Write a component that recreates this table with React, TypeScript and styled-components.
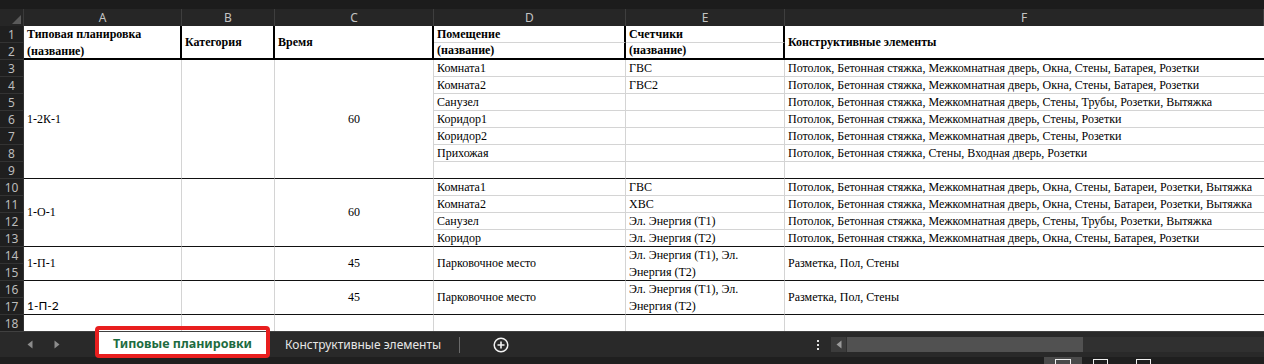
import React from 'react'
import styled, { createGlobalStyle } from 'styled-components'

type Edge = 'thick' | 'black' | 'gray' | 'none'

interface CellSpec {
  r: number
  c: number
  rs?: number
  text?: React.ReactNode
  v?: 'flex-start' | 'center' | 'flex-end'
  align?: 'flex-start' | 'center'
  head?: boolean
  bottom?: Edge
  sans?: boolean
}

const GlobalStyle = createGlobalStyle`
  html, body {
    margin: 0;
    padding: 0;
    background: #1e1e1e;
  }
  * {
    box-sizing: border-box;
  }
`

const COLUMNS = ['A', 'B', 'C', 'D', 'E', 'F']

const Window = styled.div`
  width: 1264px;
  height: 364px;
  overflow: hidden;
  background: #1e1e1e;
  display: flex;
  flex-direction: column;
`

const TopStrip = styled.div`
  flex: none;
  height: 9px;
  background: #1c1c1c;
`

const Sheet = styled.div`
  flex: none;
  height: 322px;
  overflow: hidden;
  display: grid;
  grid-template-columns: 24px 158px 93px 159px 192px 159px 1fr;
  grid-template-rows: repeat(19, 17px);
  background: #ffffff;
`

const Corner = styled.div`
  grid-row: 1;
  grid-column: 1;
  background: #262626;
  position: relative;
  border-right: 1px solid #3a3a3a;

  &::after {
    content: '';
    position: absolute;
    right: 2px;
    bottom: 2px;
    border-style: solid;
    border-width: 0 0 9px 9px;
    border-color: transparent transparent #5a5a5a transparent;
  }
`

const ColHeader = styled.div<{ $col: number }>`
  grid-row: 1;
  grid-column: ${(p) => p.$col + 2};
  background: #262626;
  color: #c4c4c4;
  font: 12px 'Noto Sans', 'Open Sans', sans-serif;
  display: flex;
  align-items: center;
  justify-content: center;
  border-right: 1px solid #3e3e3e;
`

const RowHeader = styled.div<{ $row: number }>`
  grid-row: ${(p) => p.$row + 1};
  grid-column: 1;
  background: #1f1f1f;
  color: #bcbcbc;
  font: 12px 'Noto Sans', 'Open Sans', sans-serif;
  display: flex;
  align-items: center;
  justify-content: center;
  border-bottom: 1px solid #333333;
  border-right: 1px solid #333333;
`

const edgeCss = (e: Edge) =>
  e === 'thick'
    ? '2px solid #000'
    : e === 'black'
      ? '1px solid #111'
      : e === 'gray'
        ? '1px solid #d4d4d4'
        : '0'

const Cell = styled.div<{
  $r: number
  $c: number
  $rs: number
  $v: string
  $align: string
  $head: boolean
  $bottom: Edge
  $sans: boolean
}>`
  grid-row: ${(p) => p.$r + 1} / span ${(p) => p.$rs};
  grid-column: ${(p) => p.$c + 2};
  display: flex;
  align-items: ${(p) => p.$v};
  justify-content: ${(p) => p.$align};
  padding: 0 3px;
  line-height: 17px;
  white-space: nowrap;
  color: #000;
  font-family: ${(p) =>
    p.$sans ? "Lato, 'Liberation Sans', sans-serif" : "'Liberation Serif', 'Times New Roman', serif"};
  font-size: 12px;
  font-weight: ${(p) => (p.$head ? 700 : 400)};
  border-right: ${(p) => (p.$c === 5 ? '0' : p.$head ? '2px solid #000' : '1px solid #d4d4d4')};
  border-bottom: ${(p) => edgeCss(p.$bottom)};
`

const TabBar = styled.div`
  flex: none;
  height: 26px;
  background: #292929;
  border-top: 1px solid #404040;
  display: flex;
  align-items: center;
`

const Nav = styled.div`
  width: 99px;
  flex: none;
  display: flex;
  align-items: center;
  padding-left: 27px;
  gap: 21px;
`

const ActiveTab = styled.div`
  position: relative;
  align-self: stretch;
  width: 167px;
  flex: none;
  margin-bottom: 3px;
  background: #ffffff;
  color: #1d6b40;
  font: 700 12.5px 'Noto Sans', 'Open Sans', sans-serif;
  display: flex;
  align-items: center;
  justify-content: center;

  &::after {
    content: '';
    position: absolute;
    left: -4px;
    right: -4px;
    top: -6px;
    bottom: -4px;
    border: 4px solid #e81e1e;
    border-radius: 4px;
  }
`

const Tab = styled.div`
  flex: none;
  margin-left: 19px;
  color: #e6e6e6;
  font: 12px 'Noto Sans', 'Open Sans', sans-serif;
`

const Divider = styled.div`
  flex: none;
  width: 1px;
  height: 16px;
  margin-left: 18px;
  background: #6a6a6a;
`

const AddButton = styled.div`
  flex: none;
  margin-left: 33px;
  display: flex;
`

const Spacer = styled.div`
  flex: 1;
`

const Dots = styled.div`
  flex: none;
  width: 3px;
  display: flex;
  flex-direction: column;
  gap: 2px;
  margin-right: 11px;

  span {
    width: 2px;
    height: 2px;
    background: #e0e0e0;
  }
`

const Scrollbar = styled.div`
  flex: none;
  width: 433px;
  height: 15px;
  background: #303030;
  display: flex;
`

const ScrollButton = styled.div`
  width: 15px;
  background: #3c3c3c;
  display: flex;
  align-items: center;
  justify-content: center;
`

const Thumb = styled.div`
  width: 236px;
  margin-left: 1px;
  background: #515151;
`

const StatusBar = styled.div`
  flex: 1;
  background: #1f1f1f;
  display: flex;
  align-items: flex-start;
  padding-left: 1044px;
`

const ViewButton = styled.div<{ $active?: boolean; $gap: number }>`
  width: ${(p) => (p.$active ? 38 : 15)}px;
  height: 7px;
  margin-left: ${(p) => p.$gap}px;
  background: ${(p) => (p.$active ? '#4a4a4a' : 'transparent')};
  display: flex;
  justify-content: center;
  padding-top: 2px;

  &::before {
    content: '';
    width: 14px;
    height: 5px;
    border: 1px solid #f0f0f0;
    border-bottom: 0;
  }
`

const Arrow = ({ dir, color = '#8c8c8c' }: { dir: 'left' | 'right'; color?: string }) => (
  <svg width="6" height="9" viewBox="0 0 6 9">
    <path d={dir === 'left' ? 'M5.5 0.5 L0.5 4.5 L5.5 8.5 Z' : 'M0.5 0.5 L5.5 4.5 L0.5 8.5 Z'} fill={color} />
  </svg>
)

const PlusCircle = () => (
  <svg width="16" height="16" viewBox="0 0 16 16">
    <circle cx="8" cy="8" r="6.8" fill="none" stroke="#f2f2f2" strokeWidth="1.5" />
    <path d="M8 4.5 V11.5 M4.5 8 H11.5" stroke="#f2f2f2" strokeWidth="1.6" />
  </svg>
)

const full1 = 'Потолок, Бетонная стяжка, Межкомнатная дверь, Окна, Стены, Батарея, Розетки'
const full2 = 'Потолок, Бетонная стяжка, Межкомнатная дверь, Окна, Стены, Батареи, Розетки, Вытяжка'
const bath = 'Потолок, Бетонная стяжка, Межкомнатная дверь, Стены, Трубы, Розетки, Вытяжка'
const hall = 'Потолок, Бетонная стяжка, Межкомнатная дверь, Стены, Розетки'
const energy = (
  <span>
    Эл. Энергия (Т1), Эл.
    <br />
    Энергия (Т2)
  </span>
)

const header: CellSpec[] = [
  { r: 1, c: 0, rs: 2, v: 'flex-start', head: true, bottom: 'thick', text: <span>Типовая планировка<br />(название)</span> },
  { r: 1, c: 1, rs: 2, head: true, bottom: 'thick', text: 'Категория' },
  { r: 1, c: 2, rs: 2, head: true, bottom: 'thick', text: 'Время' },
  { r: 1, c: 3, head: true, bottom: 'gray', text: 'Помещение' },
  { r: 2, c: 3, head: true, bottom: 'thick', text: '(название)' },
  { r: 1, c: 4, head: true, bottom: 'gray', text: 'Счетчики' },
  { r: 2, c: 4, head: true, bottom: 'thick', text: '(название)' },
  { r: 1, c: 5, rs: 2, head: true, bottom: 'thick', text: 'Конструктивные элементы' },
]

const listGroup = (start: number, name: string, time: string, rows: [string, string, string][]): CellSpec[] => {
  const rs = rows.length
  const cells: CellSpec[] = [
    { r: start, c: 0, rs, bottom: 'black', text: name },
    { r: start, c: 1, rs, bottom: 'black' },
    { r: start, c: 2, rs, bottom: 'black', align: 'center', text: time },
  ]
  rows.forEach((row, i) => {
    row.forEach((t, j) => {
      cells.push({ r: start + i, c: 3 + j, bottom: i === rs - 1 ? 'black' : 'gray', text: t || undefined })
    })
  })
  return cells
}

const parkingGroup = (start: number, name: string, sans: boolean): CellSpec[] => [
  { r: start, c: 0, rs: 2, bottom: 'black', text: name, v: sans ? 'flex-end' : 'center', sans },
  { r: start, c: 1, rs: 2, bottom: 'black' },
  { r: start, c: 2, rs: 2, bottom: 'black', align: 'center', text: '45' },
  { r: start, c: 3, rs: 2, bottom: 'black', text: 'Парковочное место' },
  { r: start, c: 4, rs: 2, bottom: 'black', text: energy },
  { r: start, c: 5, rs: 2, bottom: 'black', text: 'Разметка, Пол, Стены' },
]

const cells: CellSpec[] = [
  ...header,
  ...listGroup(3, '1-2К-1', '60', [
    ['Комната1', 'ГВС', full1],
    ['Комната2', 'ГВС2', full1],
    ['Санузел', '', bath],
    ['Коридор1', '', hall],
    ['Коридор2', '', hall],
    ['Прихожая', '', 'Потолок, Бетонная стяжка, Стены, Входная дверь, Розетки'],
    ['', '', ''],
  ]),
  ...listGroup(10, '1-О-1', '60', [
    ['Комната1', 'ГВС', full2],
    ['Комната2', 'ХВС', full2],
    ['Санузел', 'Эл. Энергия (Т1)', bath],
    ['Коридор', 'Эл. Энергия (Т2)', full1],
  ]),
  ...parkingGroup(14, '1-П-1', false),
  ...parkingGroup(16, '1-П-2', true),
  ...COLUMNS.map((_, c): CellSpec => ({ r: 18, c, bottom: 'none' })),
]

const App = () => {
  return (
    <Window>
      <GlobalStyle />
      <TopStrip />
      <Sheet>
        <Corner />
        {COLUMNS.map((l, i) => (
          <ColHeader key={l} $col={i}>
            {l}
          </ColHeader>
        ))}
        {Array.from({ length: 18 }, (_, i) => (
          <RowHeader key={i} $row={i + 1}>
            {i + 1}
          </RowHeader>
        ))}
        {cells.map((cell) => (
          <Cell
            key={`${cell.r}-${cell.c}`}
            $r={cell.r}
            $c={cell.c}
            $rs={cell.rs ?? 1}
            $v={cell.v ?? 'center'}
            $align={cell.align ?? 'flex-start'}
            $head={!!cell.head}
            $bottom={cell.bottom ?? 'gray'}
            $sans={!!cell.sans}
          >
            {cell.text}
          </Cell>
        ))}
      </Sheet>
      <TabBar>
        <Nav>
          <Arrow dir="left" />
          <Arrow dir="right" />
        </Nav>
        <ActiveTab>Типовые планировки</ActiveTab>
        <Tab>Конструктивные элементы</Tab>
        <Divider />
        <AddButton>
          <PlusCircle />
        </AddButton>
        <Spacer />
        <Dots>
          <span />
          <span />
          <span />
        </Dots>
        <Scrollbar>
          <ScrollButton>
            <Arrow dir="left" color="#9a9a9a" />
          </ScrollButton>
          <Thumb />
        </Scrollbar>
      </TabBar>
      <StatusBar>
        <ViewButton $active $gap={0} />
        <ViewButton $gap={11} />
        <ViewButton $gap={28} />
      </StatusBar>
    </Window>
  )
}

export default App
